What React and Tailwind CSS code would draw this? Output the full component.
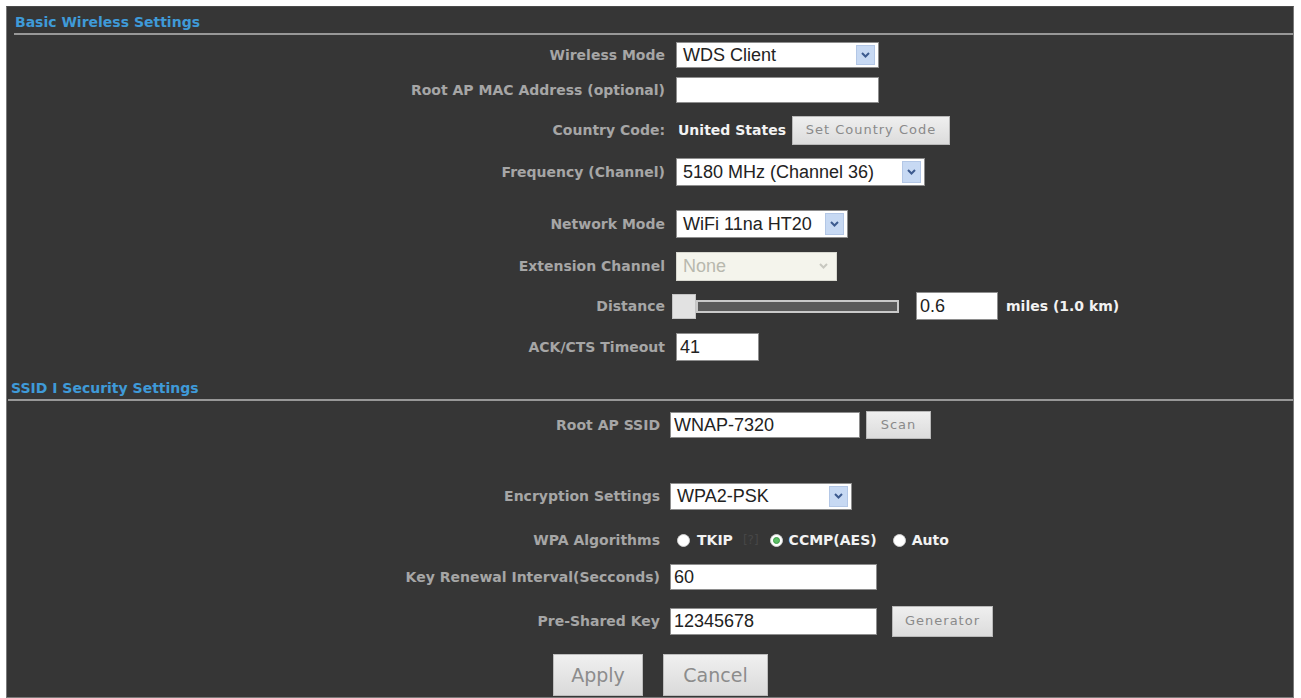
import { useState } from "react";

const labelFont = "font-['DejaVu_Sans',sans-serif]";
const fieldFont = "font-['Liberation_Sans',Arial,sans-serif]";

function Chevron({ color = "#3d5b8f" }) {
  return (
    <svg width="9" height="6" viewBox="0 0 9 6">
      <path d="M1 1 L4.5 4.5 L8 1" fill="none" stroke={color} strokeWidth="2" />
    </svg>
  );
}

function Row({ label, className, labelWidth, gap, children }) {
  return (
    <div className={`flex items-center h-[30px] shrink-0 ${gap} ${className}`}>
      <div
        className={`${labelWidth} shrink-0 text-right text-[14px] font-bold text-[#a6a6a6] leading-none ${labelFont}`}
      >
        {label}
      </div>
      {children}
    </div>
  );
}

function Select({ value, size, disabled }) {
  if (disabled) {
    return (
      <div className={`${size} flex items-center bg-[#f4f4ec] border border-[#d8d8d0]`}>
        <span className={`flex-1 pl-[6px] text-[18px] leading-none text-[#b8b8ae] ${fieldFont}`}>
          {value}
        </span>
        <span className="w-[18px] mr-[4px] flex items-center justify-center">
          <Chevron color="#c8c8c0" />
        </span>
      </div>
    );
  }
  return (
    <div className={`${size} flex items-center bg-white border border-[#8e8e8e]`}>
      <span className={`flex-1 pl-[6px] text-[18px] leading-none text-[#222] whitespace-nowrap ${fieldFont}`}>
        {value}
      </span>
      <span className="w-[19px] self-stretch my-[2px] mr-[3px] bg-[#c7d9f3] border border-[#b3c7e6] flex items-center justify-center">
        <Chevron />
      </span>
    </div>
  );
}

function TextBox({ value, size }) {
  const [text, setText] = useState(value);
  return (
    <input
      className={`${size} bg-white border border-[#8e8e8e] pl-[3px] text-[18px] leading-none text-[#222] outline-none ${fieldFont}`}
      value={text}
      onChange={(e) => setText(e.target.value)}
    />
  );
}

function SmallButton({ children, size }) {
  return (
    <button
      type="button"
      className={`${size} bg-gradient-to-b from-[#efefef] to-[#dcdcdc] border border-[#b9b9b9] text-[13px] tracking-[1px] text-[#8a8a8a] ${labelFont}`}
    >
      {children}
    </button>
  );
}

function Radio({ checked }) {
  return (
    <span className="w-[13px] h-[13px] rounded-full bg-white border border-[#cfcfcf] flex items-center justify-center shrink-0">
      {checked && (
        <span className="w-[7px] h-[7px] rounded-full bg-[#5cbf66] border border-[#3f9a49]" />
      )}
    </span>
  );
}

function Heading({ children, className, textPad, linePad }) {
  return (
    <div className={`shrink-0 ${className}`}>
      <div
        className={`${textPad} h-[16px] text-[14px] leading-[16px] font-bold text-[#3f9ad8] ${labelFont}`}
      >
        {children}
      </div>
      <div className={`${linePad} mt-[3px] h-[2px] bg-[#989898]`} />
    </div>
  );
}

export default function App() {
  const first = { labelWidth: "w-[658px]", gap: "gap-[11px]" };
  const second = { labelWidth: "w-[653px]", gap: "gap-[10px]" };
  const bold = `text-[14px] font-bold text-[#f2f2f2] leading-none ${labelFont}`;

  return (
    <div className="w-[1301px] h-[698px] bg-white pt-[6px] pl-[6px] overflow-hidden">
      <div className="w-[1288px] h-[692px] bg-[#363636] border-l border-r border-b border-t border-[#7a7a7a] border-t-[#4a4a4a] flex flex-col">
        <Heading className="pt-[7px]" textPad="pl-[8px]" linePad="ml-[7px]">
          Basic Wireless Settings
        </Heading>

        <Row label="Wireless Mode" className="mt-[5px]" {...first}>
          <Select value="WDS Client" size="w-[203px] h-[26px]" />
        </Row>
        <Row label="Root AP MAC Address (optional)" className="mt-[5px]" {...first}>
          <TextBox value="" size="w-[203px] h-[26px]" />
        </Row>
        <Row label="Country Code:" className="mt-[10px]" {...first}>
          <span className={`${bold} ml-[2px]`}>United States</span>
          <SmallButton size="w-[158px] h-[29px] -ml-[5px]">Set Country Code</SmallButton>
        </Row>
        <Row label="Frequency (Channel)" className="mt-[12px]" {...first}>
          <Select value="5180 MHz (Channel 36)" size="w-[249px] h-[28px]" />
        </Row>
        <Row label="Network Mode" className="mt-[22px]" {...first}>
          <Select value="WiFi 11na HT20" size="w-[172px] h-[28px]" />
        </Row>
        <Row label="Extension Channel" className="mt-[12px]" {...first}>
          <Select value="None" size="w-[161px] h-[29px]" disabled />
        </Row>
        <Row label="Distance" className="mt-[10px]" {...first}>
          <div className="flex items-center -ml-[4px]">
            <span className="w-[24px] h-[25px] bg-[#e2e2e2] border border-[#c4c4c4]" />
            <span className="w-[203px] h-[13px] bg-[#5a5a5a] border-2 border-[#c9c9c9]" />
          </div>
          <TextBox value="0.6" size="w-[82px] h-[28px] ml-[6px]" />
          <span className={`${bold} ml-[-3px]`}>miles (1.0 km)</span>
        </Row>
        <Row label="ACK/CTS Timeout" className="mt-[11px]" {...first}>
          <TextBox value="41" size="w-[83px] h-[28px]" />
        </Row>

        <Heading className="mt-[18px]" textPad="pl-[4px]" linePad="ml-[1px]">
          SSID I Security Settings
        </Heading>

        <Row label="Root AP SSID" className="mt-[9px]" {...second}>
          <TextBox value="WNAP-7320" size="w-[190px] h-[26px]" />
          <SmallButton size="w-[65px] h-[28px] -ml-[4px]">Scan</SmallButton>
        </Row>
        <Row label="Encryption Settings" className="mt-[41px]" {...second}>
          <Select value="WPA2-PSK" size="w-[182px] h-[27px]" />
        </Row>
        <Row label="WPA Algorithms" className="mt-[14px]" {...second}>
          <div className="flex items-center ml-[7px]">
            <Radio />
            <span className={`${bold} ml-[7px]`}>TKIP</span>
            <span className={`text-[12px] text-[#474747] ml-[10px] ${labelFont}`}>[?]</span>
            <span className="ml-[11px]">
              <Radio checked />
            </span>
            <span className={`${bold} ml-[6px]`}>CCMP(AES)</span>
            <span className="ml-[16px]">
              <Radio />
            </span>
            <span className={`${bold} ml-[6px]`}>Auto</span>
          </div>
        </Row>
        <Row label="Key Renewal Interval(Secconds)" className="mt-[7px]" {...second}>
          <TextBox value="60" size="w-[207px] h-[26px]" />
        </Row>
        <Row label="Pre-Shared Key" className="mt-[14px]" {...second}>
          <TextBox value="12345678" size="w-[207px] h-[27px]" />
          <SmallButton size="w-[101px] h-[31px] ml-[5px]">Generator</SmallButton>
        </Row>

        <div className="mt-[18px] pl-[546px] flex gap-[20px] shrink-0">
          <button
            type="button"
            className={`w-[90px] h-[42px] bg-gradient-to-b from-[#f0f0f0] to-[#dadada] border border-[#bdbdbd] text-[19px] text-[#8c8c8c] ${labelFont}`}
          >
            Apply
          </button>
          <button
            type="button"
            className={`w-[105px] h-[42px] bg-gradient-to-b from-[#f0f0f0] to-[#dadada] border border-[#bdbdbd] text-[19px] text-[#8c8c8c] ${labelFont}`}
          >
            Cancel
          </button>
        </div>
      </div>
    </div>
  );
}
